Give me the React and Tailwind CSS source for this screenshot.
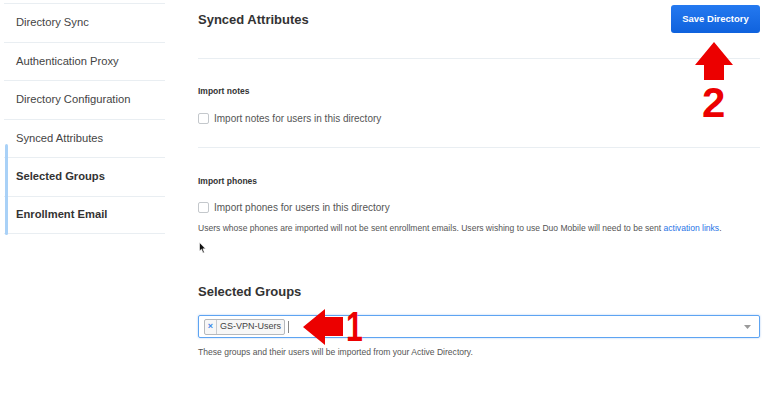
import React from "react";

const sideItems = [
  { label: "Directory Sync", bold: false },
  { label: "Authentication Proxy", bold: false },
  { label: "Directory Configuration", bold: false },
  { label: "Synced Attributes", bold: false },
  { label: "Selected Groups", bold: true },
  { label: "Enrollment Email", bold: true },
];

function Checkbox() {
  return (
    <span className="inline-block w-[11px] h-[11px] rounded-[2px] border border-[#c4c8cc] bg-white shrink-0" />
  );
}

export default function App() {
  return (
    <div
      className="relative w-[768px] h-[400px] bg-white flex overflow-hidden"
      style={{ fontFamily: '"Liberation Sans", Arial, Helvetica, sans-serif' }}
    >
      {/* Sidebar */}
      <div className="relative ml-[4px] w-[161px] pt-[3px] shrink-0">
        {sideItems.map((it, i) => (
          <div
            key={it.label}
            className={
              "h-[38.5px] flex items-center pl-[12px] border-t border-[#e9eef2] text-[11.2px] " +
              (it.bold ? "font-bold text-[#333]" : "text-[#444]") +
              (i === sideItems.length - 1 ? " border-b" : "")
            }
          >
            {it.label}
          </div>
        ))}
        <div className="absolute left-[1px] top-[144px] w-[3px] h-[91px] rounded-[2px] bg-[#a9d1f7]" />
      </div>

      {/* Main */}
      <div className="ml-[33px] w-[562px] shrink-0">
        <div className="mt-[5px] h-[28px] flex items-center justify-between">
          <h1 className="text-[13px] font-bold text-[#333] leading-none">Synced Attributes</h1>
          <button className="h-[28px] w-[89px] rounded-[3px] bg-gradient-to-b from-[#2479f0] to-[#0f62dd] text-white text-[9.5px] font-bold">
            Save Directory
          </button>
        </div>
        <div className="mt-[25px] border-t border-[#e9eef2]" />

        <div className="mt-[26px] h-[12px] leading-[12px] text-[8.5px] font-bold text-[#333]">Import notes</div>
        <div className="mt-[14px] h-[14px] flex items-center gap-[5px]">
          <Checkbox />
          <span className="text-[10px] text-[#555]">Import notes for users in this directory</span>
        </div>
        <div className="mt-[22px] border-t border-[#e9eef2]" />

        <div className="mt-[27px] h-[12px] leading-[12px] text-[8.5px] font-bold text-[#333]">Import phones</div>
        <div className="mt-[13px] h-[14px] flex items-center gap-[5px]">
          <Checkbox />
          <span className="text-[10px] text-[#555]">Import phones for users in this directory</span>
        </div>
        <div className="mt-[8px] h-[12px] leading-[12px] text-[8.55px] text-[#555] whitespace-nowrap">
          Users whose phones are imported will not be sent enrollment emails. Users wishing to use Duo Mobile will need to be sent{" "}
          <span className="text-[#1f73e6]">activation links</span>.
        </div>

        <h2 className="mt-[49px] h-[18px] leading-[18px] text-[13px] font-bold text-[#333]">Selected Groups</h2>
        <div className="mt-[14px] h-[23px] rounded-[2px] border border-[#5ea4f2] flex items-center pl-[5px] pr-[8px] shadow-[0_0_2px_rgba(80,150,240,0.5)]">
          <div className="h-[16px] flex items-stretch border border-[#b5b8bc] rounded-[2px] bg-[#f7f7f7]">
            <span className="w-[12px] flex items-center justify-center text-[9px] font-bold text-[#3a86e8] border-r border-[#c8cbcf]">×</span>
            <span className="px-[3px] flex items-center text-[9px] text-[#444]">GS-VPN-Users</span>
          </div>
          <span className="ml-[3px] w-px h-[12px] bg-[#888]" />
          <div className="flex-1" />
          <svg width="7" height="4" viewBox="0 0 7 4">
            <polygon points="0,0 7,0 3.5,4" fill="#9a9a9a" />
          </svg>
        </div>
        <div className="mt-[8px] h-[12px] leading-[12px] text-[8.55px] text-[#555]">
          These groups and their users will be imported from your Active Directory.
        </div>
      </div>

      {/* Annotations */}
      <svg className="absolute left-[694px] top-[41px]" width="40" height="40" viewBox="0 0 40 40">
        <polygon points="20,1 39,24 30,24 30,39 10,39 10,24 1,24" fill="#ec0000" />
      </svg>
      <div className="absolute left-[702px] top-[82px] text-[42px] leading-none font-bold text-[#ec0000]">2</div>

      <svg className="absolute left-[302px] top-[308px]" width="42" height="38" viewBox="0 0 42 38">
        <polygon points="1,19 23,1 23,9 41,9 41,28 23,28 23,37" fill="#ec0000" />
      </svg>
      <div className="absolute left-[346px] top-[306px] text-[42px] leading-none font-bold text-[#ec0000] scale-x-[0.72] origin-left">1</div>

      <svg className="absolute left-[199px] top-[242px]" width="8" height="12" viewBox="0 0 8 12">
        <polygon points="0.5,0.5 0.5,9 2.5,7.2 4,11 5.3,10.4 3.9,6.8 6.5,6.8" fill="#111" stroke="#fff" strokeWidth="0.6" />
      </svg>
    </div>
  );
}
